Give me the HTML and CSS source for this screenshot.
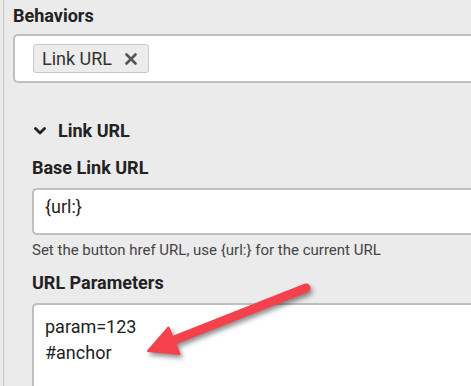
FILE: index.html
```html
<!DOCTYPE html>
<html>
<head>
<meta charset="utf-8">
<link rel="stylesheet" href="styles.css">
</head>
<body>
<div class="panel">
  <div class="label behaviors-label">Behaviors</div>
  <div class="tagbox">
    <span class="tag"><span class="tag-text">Link URL</span><svg class="tag-x" width="12" height="12" viewBox="0 0 12 12"><path d="M1.5 1.5L10.5 10.5M10.5 1.5L1.5 10.5" stroke="#555" stroke-width="2.6" stroke-linecap="round"/></svg></span>
  </div>
  <div class="section">
    <div class="label section-head"><svg class="chev" width="12" height="8" viewBox="0 0 12 8"><path d="M1.5 1.5L6 6L10.5 1.5" fill="none" stroke="#222" stroke-width="2.8" stroke-linecap="round" stroke-linejoin="round"/></svg><span>Link URL</span></div>
    <div class="label field-label">Base Link URL</div>
    <div class="input">{url:}</div>
    <div class="help">Set the button href URL, use {url:} for the current URL</div>
    <div class="label field-label params-label">URL Parameters</div>
    <div class="textarea"><div>param=123</div><div>#anchor</div></div>
  </div>
</div>
<svg class="arrow" width="471" height="386" viewBox="0 0 471 386">
  <g class="arrow-g">
    <line x1="306" y1="288" x2="172" y2="341" stroke="#f5414b" stroke-width="9" stroke-linecap="round"/>
    <polygon points="148,351 168.5,327.5 179.5,354" fill="#f5414b" stroke="#f5414b" stroke-width="2" stroke-linejoin="round"/>
  </g>
</svg>
</body>
</html>
```
FILE: styles.css
```css
html, body {
  margin: 0;
  height: 386px;
  overflow: hidden;
}
body {
  background: #ebebeb;
  font-family: Roboto, "Liberation Sans", sans-serif;
  color: #222;
  position: relative;
  width: 471px;
}
.panel {
  margin-left: 3px;
  border-left: 1px solid #c8c8c8;
  padding: 5px 0 0 9px;
  height: 386px;
  box-sizing: border-box;
  overflow: hidden;
}
.label {
  font-weight: 700;
  font-size: 18px;
  line-height: 22px;
}
.behaviors-label {
  margin-bottom: 7px;
}
.tagbox {
  border: 2px solid #bfbfbf;
  border-right: none;
  border-radius: 5px 0 0 5px;
  background: #fff;
  height: 49px;
  box-sizing: border-box;
  padding: 8px 18px;
}
.tag {
  display: inline-flex;
  align-items: center;
  gap: 13px;
  height: 29px;
  box-sizing: border-box;
  border: 1px solid #c8c8c8;
  border-radius: 3px;
  background: #ececec;
  padding: 0 11px 0 8px;
  font-size: 18px;
  color: #333;
}
.tag-x {
  display: block;
}
.section {
  padding-left: 19px;
}
.section-head {
  margin-top: 37px;
  display: flex;
  align-items: center;
}
.chev {
  margin-left: 2px;
  margin-right: 12px;
  display: block;
}
.field-label {
  margin-top: 15px;
  margin-bottom: 9px;
}
.input {
  height: 47px;
  box-sizing: border-box;
  border: 2px solid #bfbfbf;
  border-right: none;
  border-radius: 5px 0 0 5px;
  background: #fff;
  padding: 6px 11px 0;
  font-size: 18px;
  line-height: 22px;
}
.help {
  margin-top: 6px;
  font-size: 15px;
  line-height: 18px;
  color: #444;
  white-space: nowrap;
}
.params-label {
  margin-top: 13px;
}
.textarea {
  height: 83px;
  box-sizing: border-box;
  border: 2px solid #bfbfbf;
  border-right: none;
  border-bottom: none;
  border-radius: 5px 0 0 0;
  background: #fff;
  padding: 9px 11px 0;
  font-size: 18px;
  line-height: 26px;
}
.arrow {
  position: absolute;
  left: 0;
  top: 0;
  pointer-events: none;
}
.arrow-g {
  filter: drop-shadow(2px 3px 2.5px rgba(0, 0, 0, 0.45));
}
```
